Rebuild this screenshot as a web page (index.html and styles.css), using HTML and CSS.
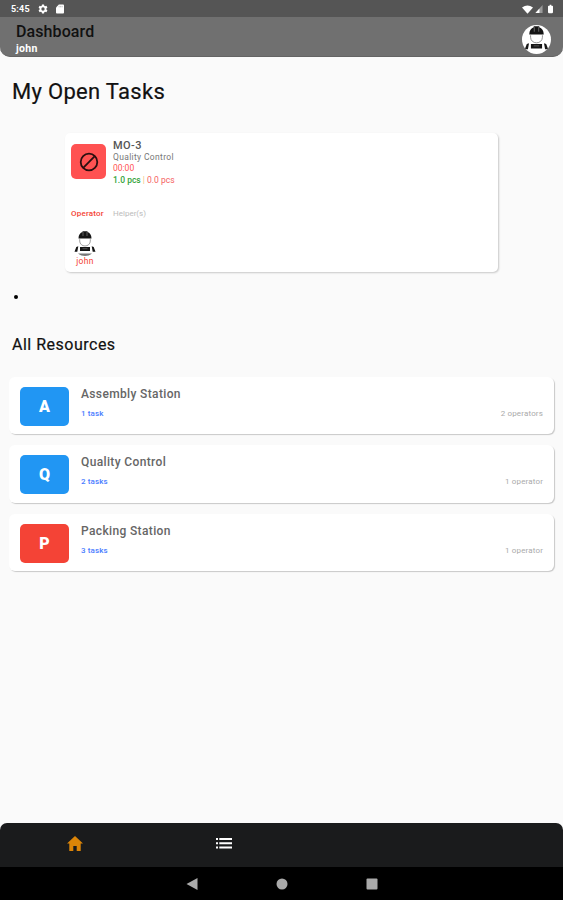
FILE: index.html
```html
<!DOCTYPE html>
<html lang="en">
<head>
<meta charset="utf-8">
<title>Dashboard</title>
<link rel="stylesheet" href="styles.css">
</head>
<body>
<svg width="0" height="0" class="defs">
  <symbol id="worker" viewBox="0 0 24 26">
    <path d="M5.5 8.500C5.500 5 7.200 2.800 9.500 2.100V1.200h5v.9c2.300.7 4 2.900 4 6.400z" fill="#151515"/>
    <path d="M10 2v4M14 2v4" stroke="#aaa" stroke-width=".5"/>
    <path d="M6.700 9.200v1.800c0 3 2.500 5 5.300 5s5.300-2 5.300-5V9.200" fill="#fff" stroke="#888" stroke-width=".8"/>
    <path d="M7 17h10v4H7z" fill="#151515"/>
    <path d="M9.500 18.700h5" stroke="#777" stroke-width=".6"/>
    <path d="M3.300 17l2-.7-1 5.400H1.500zM20.700 17l-2-.7 1 5.400h2.800z" fill="#151515"/>
  </symbol>
</svg>
<div class="screen">
  <div class="status">
    <span class="clock">5:45</span>
    <svg class="gear" viewBox="0 0 24 24"><path fill="#fff" fill-rule="evenodd" d="M9.500 1h5l.6 3.100 2 1.200 3-1.100 2.500 4.400-2.400 2v2.800l2.400 2-2.500 4.400-3-1.100-2 1.200-.6 3.100h-5l-.6-3.100-2-1.200-3 1.100-2.500-4.400 2.400-2v-2.800l-2.400-2 2.500-4.400 3 1.100 2-1.200zM12 8a4 4 0 1 0 0 8 4 4 0 0 0 0-8z"/></svg>
    <svg class="sd" viewBox="0 0 9 10"><path fill="#fff" d="M3.200 0H8q1 0 1 1v8q0 1-1 1H1q-1 0-1-1V3.200z"/><path d="M3.500 1.500v1.600M5.200 1.500v1.600M6.900 1.500v1.600" stroke="#999" stroke-width=".7"/></svg>
    <span class="grow"></span>
    <svg class="wifi" viewBox="0 0 12 9"><path fill="#fff" d="M0 2.200Q6-2 12 2.200L6 9z"/></svg>
    <svg class="signal" viewBox="0 0 8 9"><path fill="#999" d="M8 0v9H0z"/><path fill="#fff" d="M4.500 4v5H0z"/></svg>
    <svg class="battery" viewBox="0 0 6 10"><path fill="#fff" d="M2 0h2v1h1q1 0 1 1v7q0 1-1 1H1q-1 0-1-1V2q0-1 1-1h1z"/></svg>
  </div>
  <header class="appbar">
    <div class="titles"><div class="title">Dashboard</div><div class="user">john</div></div>
    <div class="avatar"><svg viewBox="0 0 24 26"><use href="#worker"/></svg></div>
  </header>
  <main class="content">
    <h1 class="tasks-heading">My Open Tasks</h1>
    <section class="task">
      <div class="task-top">
        <div class="blocked"><svg viewBox="0 0 20 20"><circle cx="10" cy="10" r="8.300"/><path d="M4.200 15.800L15.800 4.200"/></svg></div>
        <div class="task-info">
          <div class="order">MO-3</div>
          <div class="station">Quality Control</div>
          <div class="time">00:00</div>
          <div class="pieces"><span class="done">1.0 pcs</span> <span class="bar">|</span> <span class="scrap">0.0 pcs</span></div>
        </div>
      </div>
      <div class="roles"><span class="operator">Operator</span><span class="helper">Helper(s)</span></div>
      <div class="person">
        <svg viewBox="0 0 24 26"><use href="#worker"/><path d="M5 23.500h14q-2.500 2.500-7 2.500t-7-2.500z" fill="#777"/></svg>
        <span>john</span>
      </div>
    </section>
    <div class="pager"><i></i></div>
    <h2 class="resources-heading">All Resources</h2>
    <section class="resources">
      <div class="resource"><div class="tile blue">A</div><div class="info"><div class="name">Assembly Station</div><div class="meta"><span class="count">1 task</span><span class="ops">2 operators</span></div></div></div>
      <div class="resource"><div class="tile blue">Q</div><div class="info"><div class="name">Quality Control</div><div class="meta"><span class="count">2 tasks</span><span class="ops">1 operator</span></div></div></div>
      <div class="resource"><div class="tile red">P</div><div class="info"><div class="name">Packing Station</div><div class="meta"><span class="count">3 tasks</span><span class="ops">1 operator</span></div></div></div>
    </section>
  </main>
  <nav class="tabs">
    <svg class="home" viewBox="0 0 16 15"><path fill="#dc8508" d="M8 0l8 7.500h-2.300V15H9.700v-5H6.300v5h-4V7.500H0z"/></svg>
    <svg class="list" viewBox="0 0 16 11"><path fill="#fff" d="M0 0h2v2H0zM3.300 0H16v2H3.300zM0 4.300h2v2H0zM3.300 4.300H16v2H3.300zM0 8.600h2v2H0zM3.300 8.600H16v2H3.300z"/></svg>
  </nav>
  <div class="system">
    <svg viewBox="0 0 12 12"><path d="M11.500 0v12L.5 6z"/></svg>
    <svg viewBox="0 0 12 12"><circle cx="6" cy="6" r="5.500"/></svg>
    <svg viewBox="0 0 12 12"><rect x=".5" y=".5" width="11" height="11" rx="1"/></svg>
  </div>
</div>
</body>
</html>
```

FILE: styles.css
```css
* { box-sizing: border-box; }
body { margin: 0; background: #fafafa; font-family: Roboto, sans-serif; }
svg { display: block; flex: none; }
.defs { position: absolute; }
.screen { display: flex; flex-direction: column; width: 563px; height: 900px; overflow: hidden; }
.status { display: flex; align-items: center; height: 17px; padding: 1px 10px 0 11px; background: #555; color: #fff; flex: none; }
.clock { width: 27px; font-size: 9px; font-weight: 700; letter-spacing: .2px; }
.gear { width: 10px; height: 10px; margin-right: 8px; }
.sd { width: 8px; height: 10px; }
.grow { flex: 1; }
.wifi { width: 11px; height: 9px; margin-right: 2px; }
.signal { width: 8px; height: 8px; margin-right: 5px; }
.battery { width: 5px; height: 10px; }
.appbar { display: flex; justify-content: space-between; height: 40px; padding: 0 12px 0 16px; background: #707070; border-bottom: 1px solid #646464; border-radius: 0 0 10px 10px; flex: none; }
.title { height: 25px; line-height: 30px; font-size: 16px; font-weight: 500; color: #111; letter-spacing: .1px; }
.user { line-height: 13px; font-size: 10.500px; font-weight: 700; color: #fff; letter-spacing: .3px; }
.avatar { display: flex; justify-content: center; width: 29px; height: 29px; margin-top: 8px; border-radius: 50%; background: #fff; overflow: hidden; }
.avatar svg { width: 27px; height: 29px; }
.content { flex: 1; }
h1, h2 { margin: 0; font-weight: 400; color: #111; padding-left: 12px; }
.tasks-heading { height: 76px; line-height: 70px; font-size: 22px; letter-spacing: .3px; -webkit-text-stroke: .2px #111; }
.task { width: 433px; height: 139px; margin-left: 65px; padding: 6px; background: #fff; border-radius: 5px; box-shadow: 1px 1px 2px #0003; }
.task-top { display: flex; height: 69px; }
.blocked { display: flex; align-items: center; justify-content: center; width: 35px; height: 35px; margin: 5px 7px 0 0; border-radius: 5px; background: #ff5252; }
.blocked svg { width: 20px; height: 20px; fill: none; stroke: #2b1010; stroke-width: 1.800; }
.task-info { font-size: 8.500px; }
.order { height: 13px; line-height: 13px; font-size: 11px; font-weight: 500; color: #555; letter-spacing: .4px; }
.station { height: 11px; line-height: 11px; color: #777; letter-spacing: .34px; }
.time { height: 10px; line-height: 10px; color: #ff5252; }
.pieces { height: 15px; line-height: 15px; }
.done { color: #35a33b; font-weight: 500; }
.bar { color: #f0c080; }
.scrap { color: #f56060; }
.roles { display: flex; height: 22px; line-height: 12px; font-size: 8px; }
.operator { width: 42px; color: #f44336; font-weight: 500; letter-spacing: .2px; }
.helper { color: #bbb; }
.person { display: flex; flex-direction: column; align-items: center; width: 28px; color: #f44336; font-size: 8.500px; line-height: 11px; letter-spacing: .3px; }
.person svg { width: 24px; height: 26px; }
.pager { display: flex; align-items: center; height: 48px; padding: 2px 0 0 14px; }
.pager i { width: 4px; height: 4px; border-radius: 50%; background: #000; }
.resources-heading { height: 57px; line-height: 49px; font-size: 16px; letter-spacing: .5px; -webkit-text-stroke: .2px #111; }
.resources { display: flex; flex-direction: column; gap: 11px; padding: 0 9px; }
.resource { display: flex; height: 57.300px; padding: 10px 11px; border-radius: 6px; background: #fff; box-shadow: 1px 1px 1px #0003; }
.tile { display: flex; align-items: center; justify-content: center; width: 49px; height: 39px; margin-right: 12px; border-radius: 5px; color: #fff; font-size: 16px; font-weight: 900; }
.blue { background: #2196f3; }
.red { background: #f44336; }
.info { flex: 1; }
.name { height: 19px; line-height: 15px; font-size: 12px; font-weight: 500; color: #666; letter-spacing: .36px; }
.meta { display: flex; justify-content: space-between; font-size: 8px; line-height: 15px; }
.count { color: #4b7dff; font-weight: 500; letter-spacing: .1px; }
.ops { color: #aaa; letter-spacing: .15px; }
.tabs { display: flex; align-items: center; height: 44px; padding: 0 67px 4px; background: #1a1b1c; border-radius: 7px 7px 0 0; flex: none; }
.home { width: 16px; height: 15px; margin-right: 133px; }
.list { width: 16px; height: 11px; }
.system { display: flex; align-items: center; justify-content: center; gap: 78px; height: 33px; background: #000; flex: none; }
.system svg { width: 12px; height: 12px; fill: #aaa; }
```
